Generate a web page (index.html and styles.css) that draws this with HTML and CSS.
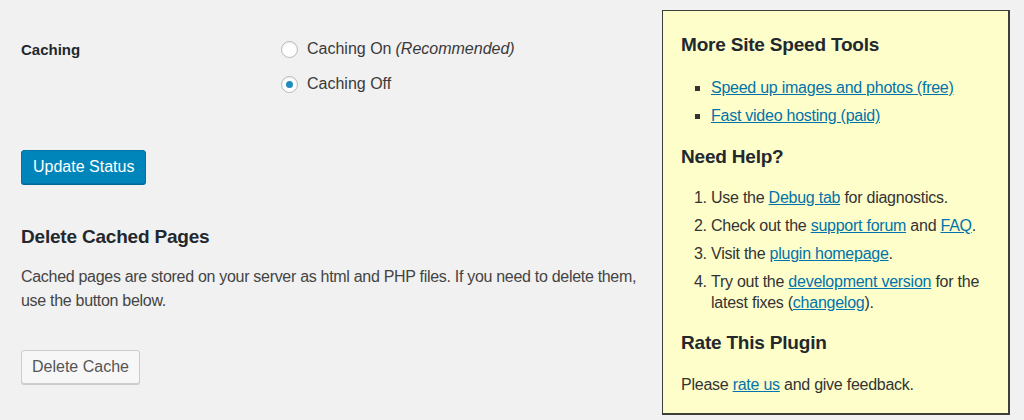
FILE: index.html
```html
<!DOCTYPE html>
<html lang="en">
<head>
<meta charset="utf-8">
<title>WP Super Cache</title>
<link rel="stylesheet" href="styles.css">
</head>
<body>
<div class="page">
  <main class="main">
    <div class="setting-row">
      <div class="setting-label">Caching</div>
      <div class="radios">
        <label class="radio"><span class="dot"></span>Caching On <em>(Recommended)</em></label>
        <label class="radio"><span class="dot checked"></span>Caching Off</label>
      </div>
    </div>
    <button class="btn btn-primary" type="button">Update Status</button>
    <h2 class="section-title">Delete Cached Pages</h2>
    <p class="desc">Cached pages are stored on your server as html and PHP files. If you need to delete them, use the button below.</p>
    <button class="btn btn-secondary" type="button">Delete Cache</button>
  </main>
  <aside class="sidebar">
    <h3 class="side-title">More Site Speed Tools</h3>
    <ul class="side-list">
      <li><a href="#">Speed up images and photos (free)</a></li>
      <li><a href="#">Fast video hosting (paid)</a></li>
    </ul>
    <h3 class="side-title">Need Help?</h3>
    <ol class="side-list numbered">
      <li>Use the <a href="#">Debug tab</a> for diagnostics.</li>
      <li>Check out the <a href="#">support forum</a> and <a href="#">FAQ</a>.</li>
      <li>Visit the <a href="#">plugin homepage</a>.</li>
      <li><span>Try out the </span><a href="#">development version</a><span> for the</span><br><span>latest fixes (</span><a href="#">changelog</a><span>).</span></li>
    </ol>
    <h3 class="side-title">Rate This Plugin</h3>
    <p class="side-text">Please <a href="#">rate us</a> and give feedback.</p>
  </aside>
</div>
</body>
</html>
```

FILE: styles.css
```css
* { box-sizing: border-box; }
html, body {
  margin: 0;
  padding: 0;
  background: #f1f1f1;
  font-family: "Liberation Sans", Arial, sans-serif;
  font-size: 16px;
  color: #444;
}
.page {
  display: flex;
  align-items: flex-start;
  height: 420px;
  overflow: hidden;
}
.main {
  flex: 1;
  padding: 38px 0 0 21px;
}
.setting-row {
  display: flex;
}
.setting-label {
  width: 260px;
  font-size: 15px;
  font-weight: bold;
  line-height: 24px;
  color: #23282d;
}
.radios {
  display: flex;
  flex-direction: column;
  gap: 13px;
}
.radio {
  display: flex;
  align-items: center;
  line-height: 22px;
  color: #3a3a3a;
}
.radio em {
  font-style: italic;
  margin-left: 4px;
}
.dot {
  width: 17px;
  height: 17px;
  border: 1px solid #b4b9be;
  border-radius: 50%;
  background: #fff;
  margin-right: 9px;
  box-shadow: inset 0 1px 2px rgba(0,0,0,0.08);
  display: flex;
  align-items: center;
  justify-content: center;
}
.dot.checked::after {
  content: "";
  width: 7px;
  height: 7px;
  border-radius: 50%;
  background: #1e8cbe;
}
.btn {
  display: block;
  height: 34px;
  font-family: inherit;
  font-size: 16px;
  line-height: 32px;
  border-radius: 3px;
}
.btn-primary {
  margin-top: 55px;
  padding: 0 11px;
  background: #0085ba;
  border: 1px solid #0073aa;
  box-shadow: 0 1px 0 #006799;
  color: #fff;
}
.btn-secondary {
  margin-top: 37px;
  padding: 0 10px;
  background: #f7f7f7;
  border: 1px solid #cccccc;
  box-shadow: 0 1px 0 #cccccc;
  color: #555;
}
.section-title {
  margin: 41px 0 0;
  font-size: 19px;
  line-height: 24px;
  font-weight: bold;
  color: #23282d;
  letter-spacing: -0.2px;
}
.desc {
  margin: 16px 0 0;
  line-height: 24px;
  letter-spacing: -0.3px;
  color: #444;
}
.sidebar {
  width: 348px;
  height: 405px;
  margin: 10px 14px 0 0;
  padding: 22px 18px 0 18px;
  background: #fefecb;
  border: 1px solid #3f3f3a;
  border-right-width: 2px;
  border-bottom-width: 2px;
  color: #333;
  letter-spacing: -0.25px;
}
.side-title {
  margin: 0;
  font-size: 19px;
  line-height: 24px;
  font-weight: bold;
  color: #23282d;
  letter-spacing: -0.2px;
}
.side-list {
  margin: 20px 0 19px;
  padding-left: 30px;
  list-style: square;
}
.side-list li {
  line-height: 21px;
  margin-bottom: 7px;
}
.side-list.numbered {
  margin-top: 18px;
  margin-bottom: 18px;
  list-style: decimal;
}
.side-text {
  margin: 20px 0 0;
  line-height: 20px;
}
a {
  color: #0073aa;
  text-decoration: underline;
}
```
